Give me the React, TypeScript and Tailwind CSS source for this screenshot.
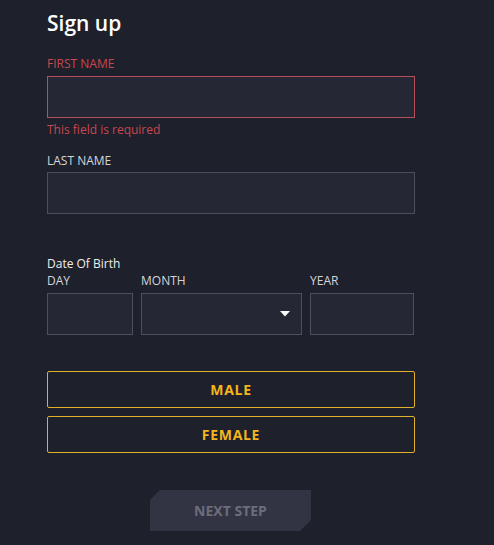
const font = { fontFamily: '"Open Sans", "Noto Sans", Arial, sans-serif' };

const Field = ({ error }: { error?: boolean }) => (
  <div
    className={`h-[42px] w-full bg-[#252735] border ${
      error ? 'border-[#b4505a]' : 'border-[#4d4f5c]'
    }`}
  />
);

export default function App() {
  return (
    <div className="min-h-[545px] w-full bg-[#1e202c] text-white" style={font}>
      <div className="w-[368px] ml-[47px] pt-[8px]">
        <h1 className="text-[21px] font-semibold leading-[30px] text-white">Sign up</h1>

        <div className="mt-[18px] text-[12px] leading-[16px] text-[#c9474f]">FIRST NAME</div>
        <div className="mt-[4px]">
          <Field error />
        </div>
        <div className="mt-[4px] text-[12px] leading-[16px] text-[#c9474f]">This field is required</div>

        <div className="mt-[15px] text-[12px] leading-[16px] text-[#d4d5da]">LAST NAME</div>
        <div className="mt-[3px]">
          <Field />
        </div>

        <div className="mt-[42px] text-[12px] leading-[16px] text-[#eeeeee]">Date Of Birth</div>
        <div className="flex gap-2 mt-[1px]">
          <div className="w-[86px]">
            <div className="text-[12px] leading-[16px] text-[#d4d5da]">DAY</div>
            <div className="mt-[4px]">
              <Field />
            </div>
          </div>
          <div className="w-[161px]">
            <div className="text-[12px] leading-[16px] text-[#d4d5da]">MONTH</div>
            <div className="mt-[4px] relative">
              <Field />
              <svg
                className="absolute right-[12px] top-[18px]"
                width="10"
                height="6"
                viewBox="0 0 10 6"
              >
                <polygon points="0,0 10,0 5,5.5" fill="#ffffff" />
              </svg>
            </div>
          </div>
          <div className="w-[104px]">
            <div className="text-[12px] leading-[16px] text-[#d4d5da]">YEAR</div>
            <div className="mt-[4px]">
              <Field />
            </div>
          </div>
        </div>

        <div className="mt-[36px] flex flex-col gap-2">
          <button className="h-[37px] w-full border border-[#e0b02a] rounded-[2px] text-[14px] font-bold tracking-[0.05em] text-[#f2b51d]">
            MALE
          </button>
          <button className="h-[37px] w-full border border-[#e0b02a] rounded-[2px] text-[14px] font-bold tracking-[0.05em] text-[#f2b51d]">
            FEMALE
          </button>
        </div>

        <div className="mt-[37px] ml-[103px]">
          <button
            className="w-[161px] h-[41px] bg-[#323444] text-[14px] font-bold text-[#6b6d7b]"
            style={{
              clipPath:
                'polygon(10px 0, 100% 0, 100% calc(100% - 11px), calc(100% - 11px) 100%, 0 100%, 0 10px)',
            }}
          >
            NEXT STEP
          </button>
        </div>
      </div>
    </div>
  );
}
